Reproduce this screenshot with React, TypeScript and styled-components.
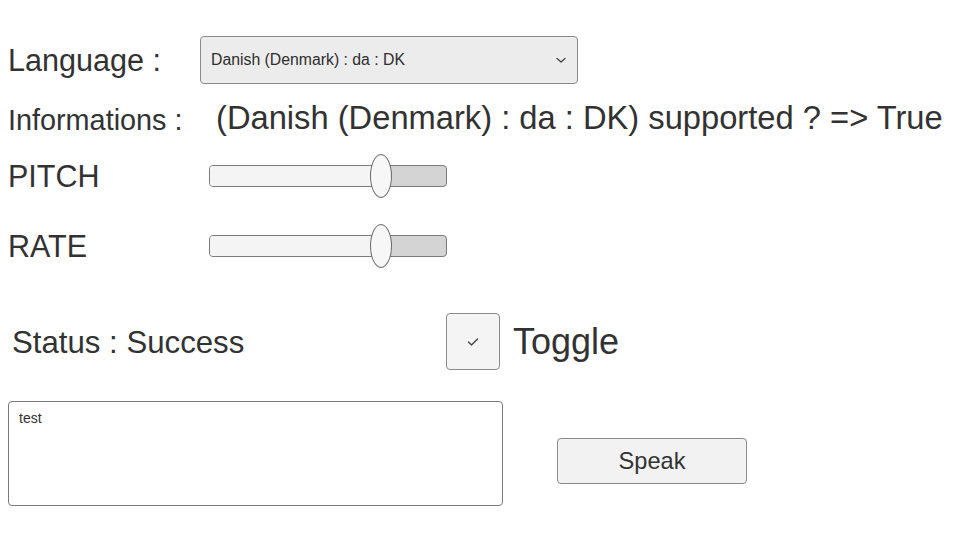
import React from "react";
import styled, { createGlobalStyle } from "styled-components";

const Global = createGlobalStyle`
  html, body { margin: 0; padding: 0; background: #ffffff; }
  body { font-family: "Liberation Sans", Arial, sans-serif; color: #323232; }
  * { box-sizing: border-box; }
`;

const Page = styled.div`
  width: 960px;
  height: 540px;
  display: flex;
  flex-direction: column;
  padding: 36px 0 0 8px;
  overflow: hidden;
`;

const Row = styled.div<{ $h: number; $mt: number }>`
  display: flex;
  align-items: center;
  height: ${(p) => p.$h}px;
  margin-top: ${(p) => p.$mt}px;
`;

const Label = styled.div<{ $w: number; $size: number; $pl?: number; $shift?: number }>`
  width: ${(p) => p.$w}px;
  flex: none;
  font-size: ${(p) => p.$size}px;
  padding-left: ${(p) => p.$pl ?? 0}px;
  margin-top: ${(p) => p.$shift ?? 0}px;
  white-space: nowrap;
  line-height: 1;
`;

const Select = styled.div`
  width: 378px;
  height: 48px;
  border: 1px solid #8a8a8a;
  border-radius: 4px;
  background: #ececec;
  display: flex;
  align-items: center;
  justify-content: space-between;
  padding: 0 10px 0 10px;
  font-size: 15.8px;
  color: #2e2e2e;
`;

const Chevron = styled.svg`
  width: 12px;
  height: 12px;
`;

const InfoValue = styled.div`
  font-size: 32.7px;
  white-space: nowrap;
  line-height: 1;
  margin-top: -4px;
`;

const SliderTrack = styled.div`
  position: relative;
  width: 238px;
  height: 22px;
  border: 1px solid #7a7a7a;
  border-radius: 4px;
  background: #d4d4d4;
`;

const SliderFill = styled.div`
  height: 100%;
  background: #f4f4f4;
  border-radius: 3px 0 0 3px;
`;

const Thumb = styled.div`
  position: absolute;
  top: -12px;
  width: 22px;
  height: 44px;
  margin-left: -11px;
  border: 1px solid #6a6a6a;
  border-radius: 50%;
  background: #f7f7f7;
`;

const ToggleBox = styled.div`
  width: 54px;
  height: 57px;
  border: 1px solid #8a8a8a;
  border-radius: 4px;
  background: #f4f4f4;
  display: flex;
  align-items: center;
  justify-content: center;
  flex: none;
`;

const ToggleLabel = styled.div`
  font-size: 36px;
  margin-left: 13px;
  line-height: 1;
`;

const TextArea = styled.div`
  width: 495px;
  height: 105px;
  border: 1px solid #7a7a7a;
  border-radius: 4px;
  background: #ffffff;
  padding: 8px 10px;
  font-size: 14px;
  flex: none;
  align-self: flex-start;
`;

const SpeakButton = styled.div`
  width: 190px;
  height: 46px;
  margin-left: 54px;
  margin-top: 37px;
  align-self: flex-start;
  border: 1px solid #8a8a8a;
  border-radius: 4px;
  background: #f2f2f2;
  display: flex;
  align-items: center;
  justify-content: center;
  font-size: 23.6px;
`;

const Slider: React.FC<{ value: number }> = ({ value }) => (
  <SliderTrack>
    <SliderFill style={{ width: `${value * 100}%` }} />
    <Thumb style={{ left: `${value * 100}%` }} />
  </SliderTrack>
);

export default function App() {
  return (
    <>
      <Global />
      <Page>
        <Row $h={48} $mt={0}>
          <Label $w={192} $size={30.6}>Language :</Label>
          <Select>
            <span>Danish (Denmark) : da : DK</span>
            <Chevron viewBox="0 0 12 12">
              <path d="M2 4.5 L6 8 L10 4.5" fill="none" stroke="#444" strokeWidth="1.3" strokeLinecap="round" strokeLinejoin="round" />
            </Chevron>
          </Select>
        </Row>
        <Row $h={40} $mt={16}>
          <Label $w={208} $size={28.8}>Informations :</Label>
          <InfoValue>(Danish (Denmark) : da : DK) supported ? =&gt; True</InfoValue>
        </Row>
        <Row $h={44} $mt={14}>
          <Label $w={201} $size={30.5}>PITCH</Label>
          <Slider value={0.725} />
        </Row>
        <Row $h={44} $mt={26}>
          <Label $w={201} $size={30.5}>RATE</Label>
          <Slider value={0.725} />
        </Row>
        <Row $h={57} $mt={45}>
          <Label $w={438} $size={31.2} $pl={4} $shift={2}>Status : Success</Label>
          <ToggleBox>
            <svg width="12" height="10" viewBox="0 0 12 10">
              <path d="M1.5 5 L4.5 8 L10.5 2" fill="none" stroke="#444" strokeWidth="1.4" strokeLinecap="round" strokeLinejoin="round" />
            </svg>
          </ToggleBox>
          <ToggleLabel>Toggle</ToggleLabel>
        </Row>
        <Row $h={105} $mt={31}>
          <TextArea>test</TextArea>
          <SpeakButton>Speak</SpeakButton>
        </Row>
      </Page>
    </>
  );
}
